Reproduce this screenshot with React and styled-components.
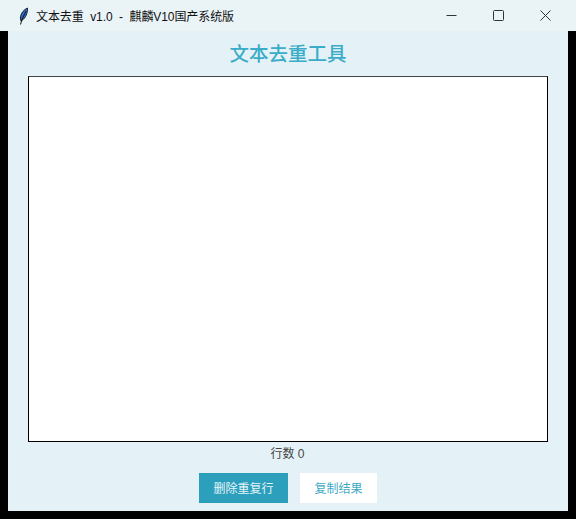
import React from "react";
import styled, { createGlobalStyle } from "styled-components";

const Global = createGlobalStyle`
  html, body { margin: 0; padding: 0; background: #000; }
  #root { width: 576px; height: 519px; overflow: hidden; }
`;
const Screen = styled.div`
  width: 576px; height: 519px; background: #000;
  display: flex; flex-direction: column;
  font-family: "Liberation Sans", "Noto Sans CJK SC", sans-serif;
`;
const TitleBar = styled.header`
  height: 31px; flex: none; background: #eaf4f7;
  display: flex; align-items: center; padding: 0 7px 0 18px;
`;
const AppIcon = styled.svg`width: 12px; height: 18px; flex: none; margin-right: 6px;`;
const WindowTitle = styled.span`
  flex: 1; font-size: 12px; color: #111; white-space: pre; letter-spacing: -0.08px; margin-bottom: 1px;
`;
const Controls = styled.div`display: flex; align-items: center;`;
const Control = styled.button`
  width: 47px; height: 31px; padding: 0; border: 0; background: none;
  display: flex; align-items: center; justify-content: center;
`;
const Client = styled.main`
  width: 560px; height: 480px; margin: 0 8px; flex: none;
  background: #e4f2f7; display: flex; flex-direction: column; align-items: center;
`;
const Heading = styled.h1`
  margin: 0; height: 45px; line-height: 44px;
  font-size: 19.5px; font-weight: 500; color: #3aacc8;
  font-family: "Noto Sans CJK SC", sans-serif;
`;
const Editor = styled.textarea`
  box-sizing: border-box; width: 520px; height: 366px; flex: none; margin: 0;
  background: #fff; border: 1px solid #000; border-top-color: #444; outline: 0; resize: none; padding: 0;
`;
const Count = styled.div`
  height: 24px; line-height: 25px; font-size: 12px; color: #444; margin-left: -1px;
`;
const Actions = styled.div`display: flex; gap: 12px; margin-top: 7px;`;
const Action = styled.button`
  height: 30px; width: ${p => p.$primary ? "89px" : "77px"}; padding: 0 0 2px; border: 0;
  background: ${p => p.$primary ? "#2c9fbd" : "#fff"};
  color: ${p => p.$primary ? "#e6f4f8" : "#3fa9c6"};
  font: 12px "Noto Sans CJK SC", sans-serif;
`;

export default function App() {
  return (
    <Screen>
      <Global />
      <TitleBar>
        <AppIcon viewBox="0 0 12 18">
          <path d="M9.500 1C6 2.500 3 6 2.500 10c-.2 1.500 0 3 .5 4l1.500-1C7.500 11 9.800 6 9.500 1Z" fill="#2f6fd0" stroke="#111" strokeWidth="0.9" />
          <path d="M8 4 4 12.500 2.500 17.500" fill="none" stroke="#111" strokeWidth="1" />
        </AppIcon>
        <WindowTitle>文本去重  v1.0  -  麒麟V10国产系统版</WindowTitle>
        <Controls>
          <Control aria-label="最小化">
            <svg width="11" height="11" viewBox="0 0 11 11"><path d="M0.500 5.500h10" stroke="#333" strokeWidth="1" /></svg>
          </Control>
          <Control aria-label="最大化">
            <svg width="11" height="11" viewBox="0 0 11 11"><rect x="0.500" y="0.500" width="10" height="10" rx="1" fill="none" stroke="#333" strokeWidth="1" /></svg>
          </Control>
          <Control aria-label="关闭">
            <svg width="11" height="11" viewBox="0 0 11 11"><path d="M0.500 0.500l10 10M10.500 0.500l-10 10" stroke="#333" strokeWidth="1" /></svg>
          </Control>
        </Controls>
      </TitleBar>
      <Client>
        <Heading>文本去重工具</Heading>
        <Editor aria-label="文本" />
        <Count>行数 0</Count>
        <Actions>
          <Action $primary>删除重复行</Action>
          <Action>复制结果</Action>
        </Actions>
      </Client>
    </Screen>
  );
}
